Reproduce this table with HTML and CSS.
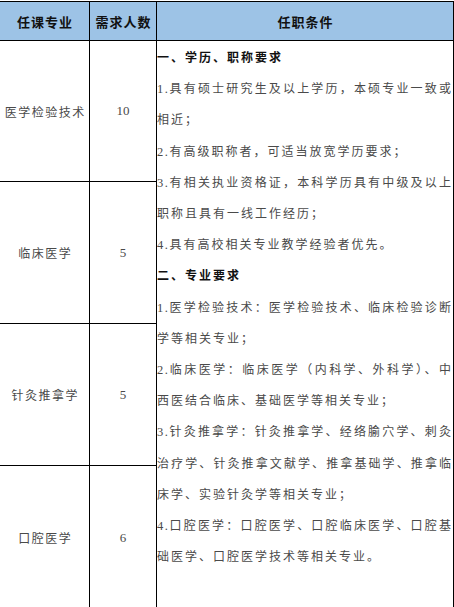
FILE: index.html
```html
<!DOCTYPE html>
<html lang="zh-CN">
<head>
<meta charset="utf-8">
<title>岗位需求</title>
<link rel="stylesheet" href="styles.css">
</head>
<body>
<div class="table">
  <div class="cell head c1">任课专业</div>
  <div class="cell head c2">需求人数</div>
  <div class="cell head c3">任职条件</div>

  <div class="cell name r1">医学检验技术</div>
  <div class="cell num r1">10</div>
  <div class="cell name r2">临床医学</div>
  <div class="cell num r2">5</div>
  <div class="cell name r3">针灸推拿学</div>
  <div class="cell num r3">5</div>
  <div class="cell name r4">口腔医学</div>
  <div class="cell num r4">6</div>

  <div class="cell req">
    <p class="title">一、学历、职称要求</p>
    <p><span class="n">1.</span>具有硕士研究生及以上学历，本硕专业一致或相近；</p>
    <p><span class="n">2.</span>有高级职称者，可适当放宽学历要求；</p>
    <p><span class="n">3.</span>有相关执业资格证，本科学历具有中级及以上职称且具有一线工作经历；</p>
    <p><span class="n">4.</span>具有高校相关专业教学经验者优先。</p>
    <p class="title">二、专业要求</p>
    <p><span class="n">1.</span>医学检验技术：医学检验技术、临床检验诊断学等相关专业；</p>
    <p><span class="n">2.</span>临床医学：临床医学（内科学、外科学）、中西医结合临床、基础医学等相关专业；</p>
    <p><span class="n">3.</span>针灸推拿学：针灸推拿学、经络腧穴学、刺灸治疗学、针灸推拿文献学、推拿基础学、推拿临床学、实验针灸学等相关专业；</p>
    <p><span class="n">4.</span>口腔医学：口腔医学、口腔临床医学、口腔基础医学、口腔医学技术等相关专业。</p>
  </div>
</div>
</body>
</html>
```

FILE: styles.css
```css
html, body {
  margin: 0;
  padding: 0;
  background: #ffffff;
}

body {
  font-family: "Noto Sans CJK SC", "Noto Sans", sans-serif;
  color: #4a4a4a;
  overflow: hidden;
}

.table {
  display: grid;
  grid-template-columns: 90px 67px 297px;
  grid-template-rows: 39px 141px 142px 142px 144px;
  margin-top: 1px;
  margin-left: -1px;
  width: 455px;
  box-sizing: border-box;
  border-top: 1px solid #000000;
  border-left: 1px solid #000000;
}

.cell {
  box-sizing: border-box;
  border-right: 1px solid #000000;
  border-bottom: 1px solid #000000;
  display: flex;
  align-items: center;
  justify-content: center;
  min-width: 0;
}

.head {
  background: #9dc3e6;
  color: #111111;
  font-weight: 700;
  font-size: 13px;
  letter-spacing: 1px;
  padding-left: 1px;
  grid-row: 1;
}

.c1 { grid-column: 1; }
.c2 { grid-column: 2; }
.c3 { grid-column: 3; }

.name {
  grid-column: 1;
  font-size: 12px;
  letter-spacing: 1.5px;
  padding-left: 1.5px;
}

.num {
  grid-column: 2;
  font-family: "Liberation Serif", "Times New Roman", serif;
  font-size: 13px;
}

.r1 { grid-row: 2; }
.r2 { grid-row: 3; }
.r3 { grid-row: 4; }
.r4 { grid-row: 5; }

.req {
  grid-column: 3;
  grid-row: 2 / span 4;
  display: block;
  padding: 0;
  font-size: 12px;
  letter-spacing: 2px;
  line-height: 31.2px;
  text-align: justify;
}

.req p {
  margin: 0;
  height: auto;
}

.req .title {
  font-weight: 700;
  color: #111111;
}

.req .n {
  font-family: "Liberation Serif", "Times New Roman", serif;
  font-size: 12.5px;
  line-height: 1;
  letter-spacing: 1.5px;
}
```
